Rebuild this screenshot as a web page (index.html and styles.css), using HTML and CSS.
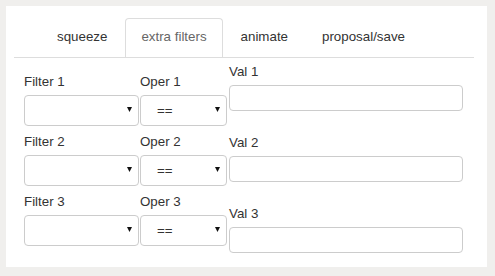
FILE: index.html
```html
<!DOCTYPE html>
<html>
<head>
<meta charset="utf-8">
<link rel="stylesheet" href="styles.css">
</head>
<body>
<div class="panel">
  <ul class="tabs">
    <li class="tab">squeeze</li>
    <li class="tab active">extra filters</li>
    <li class="tab">animate</li>
    <li class="tab">proposal/save</li>
  </ul>
  <div class="form">
    <div class="row">
      <div class="col col-filter">
        <div class="label">Filter 1</div>
        <div class="select"><span class="sel-text"></span><svg class="caret" width="5" height="5" viewBox="0 0 5 5"><polygon points="0,0 5,0 2.5,5"/></svg></div>
      </div>
      <div class="col col-oper">
        <div class="label">Oper 1</div>
        <div class="select"><span class="sel-text">==</span><svg class="caret" width="5" height="5" viewBox="0 0 5 5"><polygon points="0,0 5,0 2.5,5"/></svg></div>
      </div>
      <div class="col col-val val-r1">
        <div class="label">Val 1</div>
        <div class="input"></div>
      </div>
    </div>
    <div class="row">
      <div class="col col-filter">
        <div class="label">Filter 2</div>
        <div class="select"><span class="sel-text"></span><svg class="caret" width="5" height="5" viewBox="0 0 5 5"><polygon points="0,0 5,0 2.5,5"/></svg></div>
      </div>
      <div class="col col-oper">
        <div class="label">Oper 2</div>
        <div class="select"><span class="sel-text">==</span><svg class="caret" width="5" height="5" viewBox="0 0 5 5"><polygon points="0,0 5,0 2.5,5"/></svg></div>
      </div>
      <div class="col col-val val-r2">
        <div class="label">Val 2</div>
        <div class="input"></div>
      </div>
    </div>
    <div class="row">
      <div class="col col-filter">
        <div class="label">Filter 3</div>
        <div class="select"><span class="sel-text"></span><svg class="caret" width="5" height="5" viewBox="0 0 5 5"><polygon points="0,0 5,0 2.5,5"/></svg></div>
      </div>
      <div class="col col-oper">
        <div class="label">Oper 3</div>
        <div class="select"><span class="sel-text">==</span><svg class="caret" width="5" height="5" viewBox="0 0 5 5"><polygon points="0,0 5,0 2.5,5"/></svg></div>
      </div>
      <div class="col col-val val-r3">
        <div class="label">Val 3</div>
        <div class="input"></div>
      </div>
    </div>
  </div>
</div>
</body>
</html>
```

FILE: styles.css
```css
html, body {
  margin: 0;
  padding: 0;
}
body {
  background: #f0efed;
  font-family: "Liberation Sans", Arial, sans-serif;
  font-size: 13.333px;
  color: #333;
}
.panel {
  box-sizing: border-box;
  margin: 6px;
  width: 481px;
  height: 261px;
  background: #fff;
  padding: 12px 13px 0 8px;
}
.tabs {
  display: flex;
  list-style: none;
  margin: 0;
  padding: 0 0 0 27px;
  border-bottom: 1px solid #ddd;
}
.tab {
  margin-right: 2px;
  padding: 9px 15px 11px;
  line-height: 18px;
  border: 1px solid transparent;
  border-bottom: 0;
  border-radius: 4px 4px 0 0;
  color: #333;
}
.tab.active {
  border-color: #ddd;
  color: #666;
}
.form {
  padding: 15px 0 0 10px;
}
.row {
  display: flex;
  align-items: flex-start;
  margin-bottom: 7px;
}
.label {
  line-height: 18px;
  margin-bottom: 4px;
  color: #333;
}
.col-filter {
  width: 115px;
}
.col-oper {
  width: 87px;
  margin-left: 1px;
}
.col-val {
  width: 234px;
  margin-left: 2px;
}
.val-r1 { margin-top: -10px; }
.val-r2 { margin-top: 1px; }
.val-r3 { margin-top: 12px; }
.select {
  box-sizing: border-box;
  height: 31px;
  border: 1px solid #ccc;
  border-radius: 4px;
  display: flex;
  align-items: center;
  padding: 0 6px 0 16px;
  background: #fff;
}
.sel-text {
  flex: 1;
  color: #333;
}
.caret {
  fill: #111;
  display: block;
  margin-bottom: 2px;
}
.input {
  box-sizing: border-box;
  height: 26px;
  border: 1px solid #ccc;
  border-radius: 4px;
  background: #fff;
}
```
